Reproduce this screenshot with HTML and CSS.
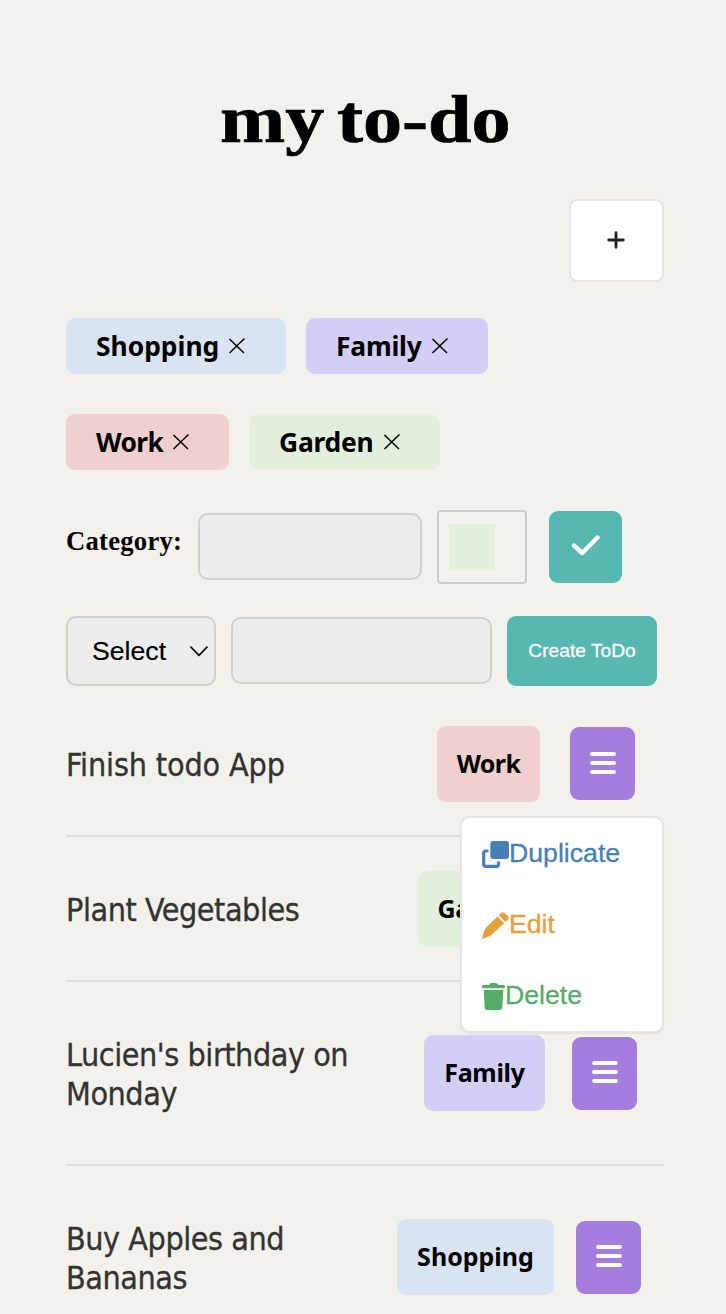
FILE: index.html
```html
<!DOCTYPE html>
<html lang="en">
<head>
<meta charset="utf-8">
<title>my to-do</title>
<link rel="stylesheet" href="styles.css">
</head>
<body>
<svg class="sprite" aria-hidden="true">
  <symbol id="bars" viewBox="0 0 26 24"><path d="M2 3H24M2 12H24M2 21H24" stroke="#fff" stroke-width="3.8" stroke-linecap="round"/></symbol>
  <symbol id="cross" viewBox="0 0 18 18"><path d="M1.5 2L16 16M16.5 1.5L1.5 16" stroke="#000" stroke-width="1.5" fill="none"/></symbol>
</svg>
<main class="app">
  <h1 class="title"><span class="title-text">my to-do</span></h1>
  <div class="toolbar">
    <button class="add" aria-label="Add"><svg width="18" height="18" viewBox="0 0 18 18"><path d="M9 1.7V16.3M1.7 9H16.3" stroke="#222" stroke-width="2.8" stroke-linecap="round"/></svg></button>
  </div>
  <div class="categories">
    <div class="category blue shopping"><span class="label">Shopping</span><svg class="cross"><use href="#cross"/></svg></div>
    <div class="category lilac family"><span class="label">Family</span><svg class="cross"><use href="#cross"/></svg></div>
    <div class="category pink work"><span class="label">Work</span><svg class="cross"><use href="#cross"/></svg></div>
    <div class="category green garden"><span class="label">Garden</span><svg class="cross"><use href="#cross"/></svg></div>
  </div>
  <form class="category-form">
    <span class="form-label">Category:</span>
    <div class="field category-name"></div>
    <div class="color-picker"><div class="swatch green"></div></div>
    <button class="confirm" type="button" aria-label="Save"><svg width="30" height="22" viewBox="0 0 30 22"><path d="M3 11.5L11.3 19L26.5 3.5" stroke="#fff" stroke-width="4.4" stroke-linecap="round" stroke-linejoin="round" fill="none"/></svg></button>
  </form>
  <form class="todo-form">
    <div class="select"><span>Select</span><svg width="18" height="11" viewBox="0 0 18 11"><path d="M1 1.2L9 9.4L17 1.2" stroke="#111" stroke-width="1.7" stroke-linecap="round" stroke-linejoin="round" fill="none"/></svg></div>
    <div class="field todo-name"></div>
    <button class="create" type="button">Create ToDo</button>
  </form>
  <ul class="todos">
    <li class="todo">
      <p class="text t1">Finish todo App</p>
      <span class="tag pink work">Work</span>
      <button class="menu-button" aria-label="Menu"><svg class="bars"><use href="#bars"/></svg></button>
      <div class="menu">
        <div class="menu-item duplicate"><svg width="27" height="27" viewBox="0 0 27 27"><rect x="8.3" y="0" width="18.7" height="18" rx="3" fill="currentColor"/><path d="M6.5 10H3.8Q1.7 10 1.7 12.1V23.2Q1.7 25.3 3.8 25.3H14.4Q16.5 25.3 16.5 23.2V20.5" stroke="currentColor" stroke-width="3.2" fill="none"/></svg><span>Duplicate</span></div>
        <div class="menu-item edit"><svg width="27" height="27" viewBox="0 0 27 27"><path d="M18.8 1.2Q20.9 -.9 23 1.2L25.8 4Q27.5 5.8 25.6 7.8L23.6 9.9L16.8 3.2Z M15.4 4.6L22.2 11.3L10 22.6Q8 24.2 5.6 25L0 27L1.6 20.6Q2.3 17.6 4.4 15.2Z" fill="currentColor"/></svg><span>Edit</span></div>
        <div class="menu-item delete"><svg width="23" height="27" viewBox="0 0 23 27"><path d="M7.5 1.3Q8 0 9.5 0H13.8Q15.3 0 15.8 1.3L16.2 2H22Q23 2 23 3.6Q23 5.2 22 5.2H1Q0 5.2 0 3.6Q0 2 1 2H7Z M1.7 7H21.3L20.3 24.5Q20.1 27 17.7 27H5.3Q2.9 27 2.7 24.5Z" fill="currentColor"/></svg><span>Delete</span></div>
      </div>
    </li>
    <li class="todo">
      <p class="text">Plant Vegetables</p>
      <span class="tag green garden">Garden</span>
      <button class="menu-button" aria-label="Menu"><svg class="bars"><use href="#bars"/></svg></button>
    </li>
    <li class="todo tall">
      <p class="text">Lucien's birthday on<br>Monday</p>
      <span class="tag lilac family">Family</span>
      <button class="menu-button" aria-label="Menu"><svg class="bars"><use href="#bars"/></svg></button>
    </li>
    <li class="todo tall">
      <p class="text">Buy Apples and<br>Bananas</p>
      <span class="tag blue shopping">Shopping</span>
      <button class="menu-button" aria-label="Menu"><svg class="bars"><use href="#bars"/></svg></button>
    </li>
  </ul>
</main>
</body>
</html>
```
FILE: styles.css
```css
* { box-sizing: border-box; }
html { overflow: hidden; }
body { margin: 0; height: 1314px; overflow: hidden; background: #f2f1ec; color: #000; font-family: "Liberation Sans", Arial, sans-serif; }
button { border: 0; padding: 0; font: inherit; display: flex; align-items: center; justify-content: center; flex: none; }
svg { display: block; flex: none; }
.sprite { display: none; }
.app { padding: 80px 62px 0 66px; }
.title { margin: 0; height: 119px; text-align: center; font: bold 68px/78px "Liberation Serif", serif; }
.title-text { display: inline-block; transform: scaleX(1.15); white-space: nowrap; word-spacing: -6px; -webkit-text-stroke: 0.7px #000; }
.toolbar { display: flex; justify-content: flex-end; }
.add { width: 95px; height: 83px; background: #fff; border: 2px solid #e6e5e3; border-radius: 8px; padding: 0 2px 2px 0; }
.categories { display: flex; flex-wrap: wrap; gap: 40px 20px; margin-top: 36px; }
.category { height: 56px; border-radius: 9px; padding-left: 30px; display: flex; align-items: center; gap: 9px; }
.category .label { font: bold 26.4px/56px "Noto Sans", sans-serif; }
.category.shopping { width: 220px; }
.category.family { width: 182px; margin-right: 150px; }
.category.family .label { letter-spacing: -0.2px; }
.category.work { width: 163px; }
.category.work .label { letter-spacing: -0.6px; }
.category.garden { width: 191px; }
.category.garden .label { letter-spacing: -0.2px; }
.cross { width: 18px; height: 18px; }
.blue { background: #d9e4f3; }
.lilac { background: #d2cef6; }
.pink { background: #f0d0cf; }
.green { background: #e2efda; }
.category-form { display: flex; align-items: flex-start; height: 74px; margin-top: 40px; }
.form-label { width: 132px; font: bold 26.67px/30px "Liberation Serif", serif; letter-spacing: 0.25px; padding-top: 16px; }
.field { background: #ededed; border: 2px solid #cfcfcf; border-radius: 10px; height: 67px; }
.category-name { width: 224px; margin-top: 3px; }
.color-picker { width: 90px; height: 74px; margin-left: 15px; border: 2px solid #cccbc9; border-radius: 4px; padding: 12px 10px; }
.swatch { width: 46px; height: 46px; }
.confirm { width: 73px; height: 72px; margin: 1px 0 0 22px; background: #57b7b1; border-radius: 9px; padding-bottom: 4px; }
.todo-form { display: flex; gap: 15px; height: 70px; margin-top: 32px; }
.select { width: 150px; background: #ededed; border: 2px solid #cfcfcf; border-radius: 10px; display: flex; align-items: center; justify-content: space-between; padding: 0 6px 0 24px; font-size: 26.67px; -webkit-text-stroke: 0.2px; }
.todo-name { width: 261px; margin-top: 1px; }
.create { width: 150px; background: #57b7b1; color: #fff; border-radius: 9px; font-size: 19.2px; -webkit-text-stroke: 0.3px; }
.todos { list-style: none; margin: 6px 0 0; padding: 0; }
.todo { position: relative; display: flex; align-items: center; padding: 34px 0 33px; border-bottom: 2px solid #dddddb; }
.text { flex: 1; margin: 0; padding: 20px 0 17px; color: #333; font: 32px/39px "DejaVu Sans Condensed", "DejaVu Sans", sans-serif; white-space: nowrap; letter-spacing: -0.45px; -webkit-text-stroke: 0.3px #333; }
.text.t1 { letter-spacing: -0.15px; }
.tag { flex: none; height: 76px; border-radius: 9px; font: bold 25px/75px "Noto Sans", sans-serif; text-align: center; }
.tall .tag { margin-bottom: 1px; }
.menu-button { width: 65px; height: 73px; margin-bottom: 1px; background: #a57ddf; border-radius: 9px; padding-bottom: 2px; }
.bars { width: 26px; height: 24px; }
.tag.work { width: 103px; margin-right: 30px; letter-spacing: -0.6px; }
.tag.garden { width: 128px; margin-right: 28px; letter-spacing: -0.3px; }
.tag.family { width: 121px; margin-right: 27px; letter-spacing: -0.3px; }
.tag.shopping { width: 157px; margin-right: 22px; }
.work + .menu-button { margin-right: 29px; }
.garden + .menu-button { margin-right: 25px; }
.family + .menu-button { margin-right: 27px; }
.shopping + .menu-button { margin-right: 23px; }
.menu { position: absolute; z-index: 1; top: 124px; right: 0; width: 204px; height: 217px; background: #fff; border: 2px solid #e6e5e4; border-radius: 10px; box-shadow: 0 1px 1px #e0dfdc; }
.menu-item { height: 71px; display: flex; align-items: center; padding-left: 20px; font-size: 26.67px; -webkit-text-stroke: 0.3px; }
.menu-item svg { margin-top: 2px; }
.duplicate { color: #447fb8; }
.edit { color: #e7a039; }
.delete { color: #54ad66; }
```
